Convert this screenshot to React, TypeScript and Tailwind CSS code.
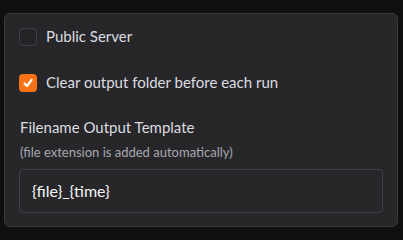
import React from "react";

export default function App() {
  return (
    <div
      className="w-[403px] h-[240px] bg-[#0f0f11] pt-[13px] pl-[4px] pr-[5px]"
      style={{ fontFamily: "Lato, 'Open Sans', sans-serif" }}
    >
      <div className="h-[214px] rounded-[6px] border border-[#3a3a3f] bg-[#27272a] px-[14px] pt-[10px]">
        <div className="flex h-[25px] items-center gap-[9px]">
          <div className="h-[18px] w-[18px] rounded-[4px] border border-[#3f3f46] bg-[#242427]" />
          <span className="text-[15px] text-[#dcdce0]">Public Server</span>
        </div>
        <div className="mt-[21px] flex h-[25px] items-center gap-[9px]">
          <div className="flex h-[18px] w-[18px] items-center justify-center rounded-[4px] bg-[#f97316]">
            <svg width="12" height="12" viewBox="0 0 12 12" fill="none">
              <path d="M2.5 6.5 L5 9 L9.5 3" stroke="white" strokeWidth="2.2" strokeLinecap="round" strokeLinejoin="round" />
            </svg>
          </div>
          <span className="text-[15px] text-[#dcdce0]">Clear output folder before each run</span>
        </div>
        <div className="mt-[20px] h-[24px] pl-[1px] text-[15px] leading-[24px] text-[#dcdce0]">
          Filename Output Template
        </div>
        <div className="mt-[3px] h-[20px] pl-[1px] text-[13px] leading-[20px] text-[#a8a8b0]">
          (file extension is added automatically)
        </div>
        <div className="mt-[7px] flex h-[44px] items-center rounded-[4px] border border-[#3f3f46] bg-[#27272a] pl-[12px] text-[16px] text-[#f4f4f5]">
          {"{file}_{time}"}
        </div>
      </div>
    </div>
  );
}
